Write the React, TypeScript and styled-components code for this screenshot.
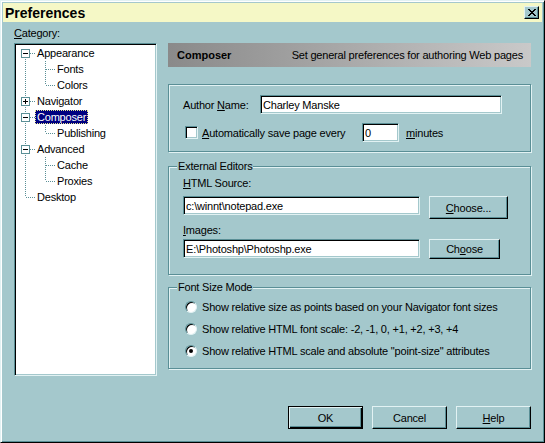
import styled, { createGlobalStyle, css } from "styled-components";

const face = "#a4c8cc";
const shadow = "#5a8f96";
const light = "#e2f2f3";

const GlobalStyle = createGlobalStyle`
  * { box-sizing: border-box; }
  html, body { margin: 0; padding: 0; background: ${face}; }
  body {
    font-family: "Liberation Sans", Arial, sans-serif;
    font-size: 11px;
    line-height: 14px;
    letter-spacing: -0.2px;
    color: #000;
  }
`;

const sunken = css`
  border: 1px solid;
  border-color: ${shadow} ${light} ${light} ${shadow};
  box-shadow: inset 1px 1px 0 #000, inset -1px -1px 0 ${face};
`;

const Window = styled.div`
  width: 545px;
  height: 443px;
  display: flex;
  flex-direction: column;
  padding: 2px;
  background: ${face};
  border: 1px solid;
  border-color: ${light} #000 #000 ${light};
  box-shadow: inset 1px 1px 0 #fff, inset -1px -1px 0 ${shadow};
`;

const TitleBar = styled.div`
  height: 19px;
  flex: none;
  display: flex;
  align-items: center;
  justify-content: space-between;
  padding: 0 3px 0 2px;
  background: #f5f8c6;
`;

const Title = styled.span`
  font-weight: bold;
  font-size: 14px;
  letter-spacing: 0;
`;

const CloseButton = styled.span`
  width: 15px;
  height: 13px;
  display: flex;
  align-items: center;
  justify-content: center;
  background: ${face};
  border: 1px solid;
  border-color: ${light} #000 #000 ${light};
  box-shadow: inset -1px -1px 0 ${shadow};
`;

const Body = styled.div`
  flex: 1;
  display: grid;
  grid-template-columns: 143px 363px;
  grid-template-rows: auto 1fr;
  column-gap: 11px;
  padding: 0 11px 11px 11px;
`;

const LeftColumn = styled.div`
  display: flex;
  flex-direction: column;
  padding-top: 4px;
`;

const CategoryLabel = styled.div`
  height: 14px;
  margin-bottom: 3px;
`;

const TreeBox = styled.div`
  height: 333px;
  background: #fff;
  ${sunken};
  padding: 1px;
`;

const TreeRow = styled.div`
  height: 16px;
  display: flex;
  align-items: center;
`;

const TreeLabel = styled.span<{ $selected?: boolean }>`
  height: 14px;
  margin-left: -1px;
  padding: 0 2px;
  white-space: nowrap;
  ${(p) =>
    p.$selected &&
    css`
      background: #000080;
      color: #fff;
      outline: 1px dotted #e8e890;
      outline-offset: -1px;
    `}
`;

const RightColumn = styled.div`
  display: flex;
  flex-direction: column;
  padding-top: 21px;
`;

const Banner = styled.div`
  height: 24px;
  display: flex;
  align-items: center;
  justify-content: space-between;
  padding: 0 8px 0 9px;
  background: linear-gradient(to right, #8a8a8a, #c9c9c9);
`;

const BannerTitle = styled.span`
  font-weight: bold;
  letter-spacing: 0;
`;

const Group = styled.fieldset<{ $mt: number; $pt: number; $pb: number }>`
  margin: ${(p) => p.$mt}px 0 0 0;
  min-inline-size: 0;
  padding: ${(p) => p.$pt}px 14px ${(p) => p.$pb}px 14px;
  border: 1px solid ${shadow};
  box-shadow: inset 1px 1px 0 ${light}, 1px 1px 0 ${light};
`;

const Legend = styled.legend`
  margin-left: -6px;
  padding: 0 1px;
  line-height: 14px;
  background: ${face};
`;

const Row = styled.div<{ $mt?: number }>`
  display: flex;
  align-items: center;
  margin-top: ${(p) => p.$mt ?? 0}px;
`;

const TopRow = styled.div<{ $mt?: number }>`
  display: flex;
  align-items: flex-start;
  margin-top: ${(p) => p.$mt ?? 0}px;
`;

const FieldLabel = styled.span<{ $w?: number; $ml?: number }>`
  flex: none;
  width: ${(p) => (p.$w ? `${p.$w}px` : "auto")};
  margin-left: ${(p) => p.$ml ?? 0}px;
  white-space: nowrap;
`;

const Caption = styled.div<{ $mt?: number }>`
  height: 14px;
  margin-top: ${(p) => p.$mt ?? 0}px;
`;

const TextBox = styled.input<{ $w: number }>`
  width: ${(p) => p.$w}px;
  height: 19px;
  flex: none;
  margin: 0;
  padding: 0 2px;
  background: #fff;
  font: 11px "Liberation Sans", Arial, sans-serif;
  letter-spacing: -0.2px;
  color: #000;
  outline: none;
  ${sunken};
`;

const CheckBox = styled.span`
  width: 13px;
  height: 13px;
  flex: none;
  margin: 0 4px 0 2px;
  background: #fff;
  ${sunken};
`;

const Radio = styled.span<{ $checked?: boolean }>`
  position: relative;
  width: 12px;
  height: 12px;
  flex: none;
  margin: 0 5px 0 2px;
  border-radius: 50%;
  background: #fff;
  border: 1px solid;
  border-color: ${shadow} ${light} ${light} ${shadow};
  box-shadow: inset 1px 1px 0 #000;
  ${(p) =>
    p.$checked &&
    css`
      &::after {
        content: "";
        position: absolute;
        left: 3px;
        top: 3px;
        width: 4px;
        height: 4px;
        border-radius: 50%;
        background: #000;
      }
    `}
`;

const RadioRow = styled.div`
  height: 22px;
  display: flex;
  align-items: center;
`;

const Button = styled.button<{ $w: number; $h: number; $ml?: number; $default?: boolean }>`
  width: ${(p) => p.$w}px;
  height: ${(p) => p.$h}px;
  flex: none;
  margin: 0 0 0 ${(p) => p.$ml ?? 0}px;
  padding: 0;
  background: ${face};
  font: 11px "Liberation Sans", Arial, sans-serif;
  letter-spacing: -0.2px;
  color: #000;
  border: 1px solid;
  border-color: ${light} #000 #000 ${light};
  box-shadow: inset -1px -1px 0 ${shadow};
  ${(p) =>
    p.$default &&
    css`
      border-color: #000;
      box-shadow: inset 1px 1px 0 ${light}, inset -1px -1px 0 #000,
        inset -2px -2px 0 ${shadow};
    `}
`;

const Footer = styled.div`
  grid-column: 1 / -1;
  align-self: end;
  display: flex;
  justify-content: flex-end;
  gap: 9px;
`;

type TreeNode = {
  label: string;
  guides: boolean[];
  up: boolean;
  down: boolean;
  expander?: "plus" | "minus";
  selected?: boolean;
};

const nodes: TreeNode[] = [
  { label: "Appearance", guides: [], up: false, down: true, expander: "minus" },
  { label: "Fonts", guides: [true], up: true, down: true },
  { label: "Colors", guides: [true], up: true, down: false },
  { label: "Navigator", guides: [], up: true, down: true, expander: "plus" },
  { label: "Composer", guides: [], up: true, down: true, expander: "minus", selected: true },
  { label: "Publishing", guides: [true], up: true, down: false },
  { label: "Advanced", guides: [], up: true, down: true, expander: "minus" },
  { label: "Cache", guides: [true], up: true, down: true },
  { label: "Proxies", guides: [true], up: true, down: false },
  { label: "Desktop", guides: [], up: true, down: false },
];

function TreeLines({ node }: { node: TreeNode }) {
  const c = node.guides.length;
  const cx = c * 20 + 9.5;
  const dot = { stroke: shadow, strokeWidth: 1, strokeDasharray: "1 1" };
  return (
    <svg width={(c + 1) * 20} height={16} shapeRendering="crispEdges" style={{ flex: "none" }}>
      {node.guides.map((g, i) =>
        g ? <line key={i} x1={i * 20 + 9.5} y1={0} x2={i * 20 + 9.5} y2={16} {...dot} /> : null
      )}
      {node.up && <line x1={cx} y1={0} x2={cx} y2={8} {...dot} />}
      {node.down && <line x1={cx} y1={8} x2={cx} y2={16} {...dot} />}
      <line x1={c * 20 + 10} y1={8.5} x2={c * 20 + 19} y2={8.5} {...dot} />
      {node.expander && (
        <g>
          <rect x={c * 20 + 5.5} y={4.5} width={8} height={8} fill="#fff" stroke={shadow} />
          <line x1={c * 20 + 7} y1={8.5} x2={c * 20 + 12} y2={8.5} stroke="#000" />
          {node.expander === "plus" && (
            <line x1={cx} y1={6} x2={cx} y2={11} stroke="#000" />
          )}
        </g>
      )}
    </svg>
  );
}

export default function App() {
  return (
    <>
      <GlobalStyle />
      <Window>
        <TitleBar>
          <Title>Preferences</Title>
          <CloseButton>
            <svg width="8" height="7" viewBox="0 0 8 7" shapeRendering="crispEdges">
              <path d="M0 0h2l2 2.5L6 0h2L5 3.5 8 7H6L4 4.5 2 7H0l3-3.5z" fill="#000" />
            </svg>
          </CloseButton>
        </TitleBar>
        <Body>
          <LeftColumn>
            <CategoryLabel>
              <u>C</u>ategory:
            </CategoryLabel>
            <TreeBox>
              {nodes.map((n) => (
                <TreeRow key={n.label}>
                  <TreeLines node={n} />
                  <TreeLabel $selected={n.selected}>{n.label}</TreeLabel>
                </TreeRow>
              ))}
            </TreeBox>
          </LeftColumn>
          <RightColumn>
            <Banner>
              <BannerTitle>Composer</BannerTitle>
              <span>Set general preferences for authoring Web pages</span>
            </Banner>
            <Group $mt={17} $pt={10} $pb={9}>
              <Row>
                <FieldLabel $w={77}>
                  Author <u>N</u>ame:
                </FieldLabel>
                <TextBox $w={242} value="Charley Manske" readOnly />
              </Row>
              <Row $mt={9}>
                <CheckBox />
                <FieldLabel $w={160}>
                  <u>A</u>utomatically save page every
                </FieldLabel>
                <TextBox $w={37} value="0" readOnly />
                <FieldLabel $ml={7}>
                  <u>m</u>inutes
                </FieldLabel>
              </Row>
            </Group>
            <Group $mt={7} $pt={3} $pb={15}>
              <Legend>External Editors</Legend>
              <Caption>
                <u>H</u>TML Source:
              </Caption>
              <TopRow $mt={6}>
                <TextBox $w={237} value="c:\winnt\notepad.exe" readOnly />
                <Button $w={79} $h={23} $ml={9}>
                  <u>C</u>hoose...
                </Button>
              </TopRow>
              <Caption $mt={4}>
                <u>I</u>mages:
              </Caption>
              <TopRow $mt={2}>
                <TextBox $w={237} value="E:\Photoshp\Photoshp.exe" readOnly />
                <Button $w={71} $h={20} $ml={9}>
                  Ch<u>o</u>ose
                </Button>
              </TopRow>
            </Group>
            <Group $mt={5} $pt={2} $pb={6}>
              <Legend>Font Size Mode</Legend>
              <RadioRow>
                <Radio />
                Show relative size as points based on your Navigator font sizes
              </RadioRow>
              <RadioRow>
                <Radio />
                Show relative HTML font scale: -2, -1, 0, +1, +2, +3, +4
              </RadioRow>
              <RadioRow>
                <Radio $checked />
                Show relative HTML scale and absolute "point-size" attributes
              </RadioRow>
            </Group>
          </RightColumn>
          <Footer>
            <Button $w={75} $h={23} $default>
              OK
            </Button>
            <Button $w={75} $h={23}>
              Cancel
            </Button>
            <Button $w={75} $h={23}>
              <u>H</u>elp
            </Button>
          </Footer>
        </Body>
      </Window>
    </>
  );
}
